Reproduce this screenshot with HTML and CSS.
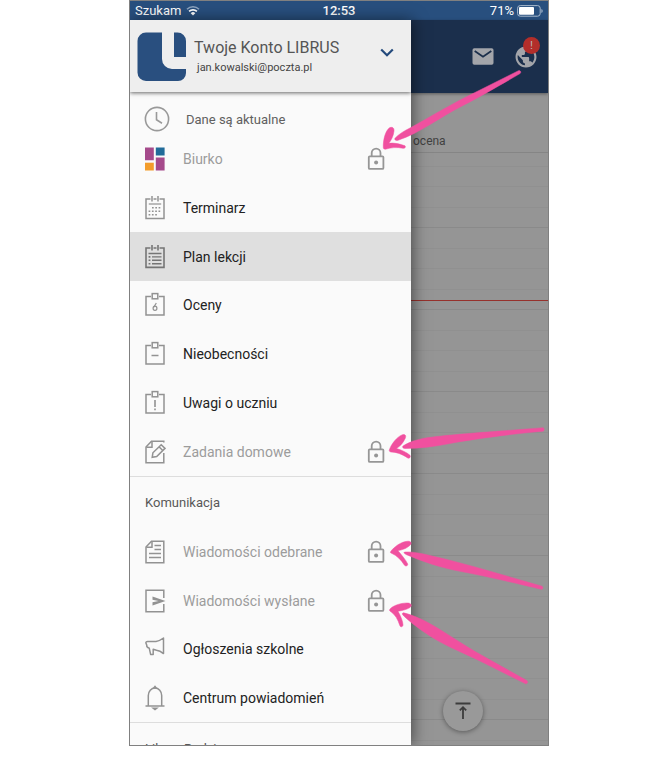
FILE: index.html
```html
<!DOCTYPE html>
<html lang="pl">
<head>
    <meta charset="UTF-8">
    <meta name="viewport" content="width=device-width, initial-scale=1.0">
    <title>Librus - menu</title>
    <link rel="stylesheet" href="styles.css">
</head>
<body>
    <!-- icons used more than once -->
    <svg class="sprite" aria-hidden="true">
        <symbol id="lock" viewBox="0 0 18 24">
            <rect x="1.8" y="9.3" width="14.6" height="12.6" rx="1" fill="none" stroke="#969696" stroke-width="1.8"/>
            <path d="M4.7 9V6a4.4 4.4 0 0 1 8.8 0v3" fill="none" stroke="#969696" stroke-width="1.8"/>
            <circle cx="9.1" cy="15.4" r="2" fill="#969696"/>
        </symbol>
        <symbol id="board" viewBox="0 0 22 26">
            <path d="M7 4.5H2v18.6h18V4.5h-5" fill="none" stroke="currentColor" stroke-width="1.5"/>
            <rect x="8.2" y="1.6" width="5.6" height="5.2" fill="none" stroke="currentColor" stroke-width="1.5"/>
        </symbol>
    </svg>

    <div class="phone">
        <div class="statusbar">
            <span class="carrier">Szukam
                <svg width="14" height="11" viewBox="0 0 14 11">
                    <path d="M1 4.2a8.6 8.6 0 0 1 12 0" fill="none" stroke="#8ea5c0" stroke-width="1.6"/>
                    <path d="M3.1 6.4a5.6 5.6 0 0 1 7.8 0" fill="none" stroke="#fff" stroke-width="1.7"/>
                    <path d="M4.7 8.2a3.3 3.3 0 0 1 4.6 0L7 10.6z" fill="#fff"/>
                </svg>
            </span>
            <span class="time">12:53</span>
            <span class="battery">71%
                <svg width="26" height="12" viewBox="0 0 26 12">
                    <rect x=".6" y=".6" width="22.6" height="10.6" rx="2.6" fill="none" stroke="#a9bacd" stroke-width="1"/>
                    <rect x="2" y="2" width="15" height="7.8" rx="1" fill="#fff"/>
                    <path d="M24.4 4v4a2.2 2.2 0 0 0 0-4z" fill="#a9bacd"/>
                </svg>
            </span>
        </div>

        <div class="screen">
            <nav class="drawer">
                <div class="account">
                    <svg class="logo" width="50" height="50" viewBox="0 0 50 50">
                        <path d="M9 0.500H25V27a10 10 0 0 0 10 10H49V41a8 8 0 0 1-8 8H9a8.500 8.500 0 0 1-8.500-8.500V9A8.500 8.500 0 0 1 9 .5z" fill="#294f7f"/>
                        <path d="M37 .5h3.500A8.500 8.500 0 0 1 49 9v16H37z" fill="#294f7f"/>
                    </svg>
                    <div class="account-text">
                        <div class="account-name">Twoje Konto LIBRUS</div>
                        <div class="account-mail">jan.kowalski@poczta.pl</div>
                    </div>
                    <button class="toggle" type="button" aria-label="Konta">
                        <svg width="14" height="9" viewBox="0 0 14 9"><path d="M1.200 1.500L7 7.200l5.800-5.700" fill="none" stroke="#244a7c" stroke-width="2.200"/></svg>
                    </button>
                </div>

                <div class="sync">
                    <svg width="26" height="26" viewBox="0 0 26 26" fill="none" stroke="#999" stroke-width="1.600">
                        <circle cx="13" cy="13" r="11.600"/>
                        <path d="M12.500 6v7.800l5.500 3.400"/>
                    </svg>
                    <span>Dane są aktualne</span>
                </div>

                <ul class="menu menu-main">
                    <li><a href="#" class="item locked">
                        <svg class="icon" viewBox="0 0 22 26">
                            <path d="M1 1.500h8.800v12.800H1zM11.800 11.500h8.800v13h-8.800z" fill="#a54a8b"/>
                            <path d="M11.800 1.500h8.800v8h-8.800z" fill="#216b99"/>
                            <path d="M1 16.700h8.800v7.800H1z" fill="#f39c2b"/>
                        </svg>
                        <span>Biurko</span>
                        <svg class="lock"><use href="#lock"/></svg>
                    </a></li>
                    <li><a href="#" class="item">
                        <svg class="icon" viewBox="0 0 22 26" fill="none" stroke="currentColor" stroke-width="1.500">
                            <path d="M6.500 4H2v19.400h18V4h-4.500M9.500 4h3M8 1v5.600M14 1v5.600"/>
                            <path d="M4.800 9h12.400" stroke-width="1.200"/>
                            <path d="M8 12.700h9.500M4.600 16.200h12.900M4.600 19.700h9.500" stroke-width="1.600" stroke-dasharray="1.700 1.600"/>
                        </svg>
                        <span>Terminarz</span>
                    </a></li>
                    <li><a href="#" class="item active">
                        <svg class="icon" viewBox="0 0 22 26" fill="none" stroke="currentColor" stroke-width="1.600">
                            <path d="M6.500 4H2v19.400h18V4h-4.500M9.500 4h3M8 1v5.600M14 1v5.600"/>
                            <path d="M4.500 9.500h13M8 12.900h9.500M8 16.300h9.500M8 19.700h9.500" stroke-width="1.400"/>
                            <path d="M4.600 12.900h1.800M4.600 16.300h1.800M4.600 19.700h1.800"/>
                        </svg>
                        <span>Plan lekcji</span>
                    </a></li>
                    <li><a href="#" class="item">
                        <svg class="icon" viewBox="0 0 22 26" fill="none" stroke="currentColor">
                            <use href="#board"/>
                            <path d="M12.300 11l-2.600 4.200" stroke-width="1.200"/>
                            <ellipse cx="11" cy="16.300" rx="1.900" ry="2.100" stroke-width="1.200"/>
                        </svg>
                        <span>Oceny</span>
                    </a></li>
                    <li><a href="#" class="item">
                        <svg class="icon" viewBox="0 0 22 26" fill="none" stroke="currentColor">
                            <use href="#board"/>
                            <path d="M7.500 14.500h7" stroke-width="1.500"/>
                        </svg>
                        <span>Nieobecności</span>
                    </a></li>
                    <li><a href="#" class="item">
                        <svg class="icon" viewBox="0 0 22 26" fill="none" stroke="currentColor">
                            <use href="#board"/>
                            <path d="M11 10v7M11 18.500v1.700" stroke-width="1.600"/>
                        </svg>
                        <span>Uwagi o uczniu</span>
                    </a></li>
                    <li><a href="#" class="item locked">
                        <svg class="icon" viewBox="0 0 22 26" fill="none" stroke="currentColor" stroke-width="1.500">
                            <path d="M19.800 3.500V2.200H7.500L2 8v15.800h17.800V14"/>
                            <path d="M8 2.500v5.800H2.300"/>
                            <path d="M8.200 18.300l.7-4.500 8.300-8.100 3.800 3.700-8.300 8.200zM15 7.800l3.800 3.700"/>
                        </svg>
                        <span>Zadania domowe</span>
                        <svg class="lock"><use href="#lock"/></svg>
                    </a></li>
                </ul>

                <h2 class="section">Komunikacja</h2>
                <ul class="menu menu-comm">
                    <li><a href="#" class="item locked">
                        <svg class="icon" viewBox="0 0 22 26" fill="none" stroke="currentColor" stroke-width="1.500">
                            <path d="M7.500 2.200H19.800v21.600H2V8z"/>
                            <path d="M8 2.500v5.800H2.300M10.500 6.500H17M10.500 10.500H17M5 14.500h12M5 18.500h12"/>
                        </svg>
                        <span>Wiadomości odebrane</span>
                        <svg class="lock"><use href="#lock"/></svg>
                    </a></li>
                    <li><a href="#" class="item locked">
                        <svg class="icon" viewBox="0 0 22 26">
                            <path d="M19.800 10V2.200H2v21.600h17.800V16" fill="none" stroke="currentColor" stroke-width="1.500"/>
                            <path d="M8.500 8.500L21.500 13 8.500 17.600v-3.400l6-1.200-6-1.200z" fill="currentColor"/>
                        </svg>
                        <span>Wiadomości wysłane</span>
                        <svg class="lock"><use href="#lock"/></svg>
                    </a></li>
                    <li><a href="#" class="item">
                        <svg class="icon" viewBox="0 0 22 26" fill="none" stroke="currentColor" stroke-width="1.500" stroke-linejoin="round">
                            <path d="M1.800 6.800Q2 5.500 3.500 5.500H12Q15.500 5 19.500 2v15.600Q16 14.500 12.500 14.200L9.200 13.200V18.400H6.600L5.300 12.300Q2.200 11.200 2.800 9.300z"/>
                        </svg>
                        <span>Ogłoszenia szkolne</span>
                    </a></li>
                    <li><a href="#" class="item">
                        <svg class="icon" viewBox="0 0 22 26" fill="none" stroke="currentColor" stroke-width="1.500">
                            <path d="M1.500 21h19M4.300 20.800V10.500a6.700 7.400 0 0 1 13.400 0v10.300"/>
                            <path d="M9.800 3l1.200-1.500L12.200 3zM9.300 23.200h3.400l-1.700 1.300z" fill="currentColor"/>
                        </svg>
                        <span>Centrum powiadomień</span>
                    </a></li>
                </ul>

                <h2 class="section">Librus Rodzina</h2>
            </nav>

            <main class="content">
                <div class="toolbar">
                    <button type="button" aria-label="Wiadomości">
                        <svg width="22" height="17" viewBox="0 0 22 17">
                            <rect x=".5" y=".3" width="21" height="16.400" rx="1.800" fill="#a3a5aa"/>
                            <path d="M2.700 3L11 8.700 19.300 3" fill="none" stroke="#1b2f4c" stroke-width="1.800"/>
                        </svg>
                    </button>
                    <button type="button" class="globe" aria-label="Powiadomienia">
                        <svg width="22" height="22" viewBox="1.500 1.500 21 21">
                            <path fill="#a3a5aa" d="M12 2C6.480 2 2 6.480 2 12s4.480 10 10 10 10-4.480 10-10S17.520 2 12 2zm-1 17.930c-3.950-.49-7-3.850-7-7.930 0-.62.080-1.210.210-1.790L9 15v1c0 1.100.9 2 2 2v1.930zm6.900-2.540c-.26-.81-1-1.390-1.900-1.390h-1v-3c0-.55-.45-1-1-1H8v-2h2c.55 0 1-.45 1-1V7h2c1.100 0 2-.9 2-2v-.41c2.930 1.190 5 4.060 5 7.410 0 2.080-.8 3.970-2.100 5.390z"/>
                        </svg>
                        <span class="badge">!</span>
                    </button>
                </div>
                <div class="column-head">ocena</div>
                <div class="timetable">
                    <div class="now"></div>
                </div>
                <button class="to-top" type="button" aria-label="Do góry">
                    <svg width="16" height="18" viewBox="0 0 16 18" fill="none" stroke="#3c3c3c" stroke-width="1.800">
                        <path d="M.5 1.500h15M8 17V5.500M4.800 8.400L8 5.200l3.200 3.200"/>
                    </svg>
                </button>
            </main>
        </div>

        <!-- arrows pointing at the locked items -->
        <svg class="arrows" width="420" height="746" viewBox="129 0 420 746" fill="#f0509f" stroke="#f0509f" stroke-width=".5" aria-hidden="true">
            <path d="M383.300 147.500C383 141 385 131 389.500 127.800C392.500 126.500 394.300 128 394 131C393.500 136 391 140.500 388.800 143.300C394 142.500 400 144 405 145.800C406 147 405 148.700 403 148.300C397 147 391 147.500 385.500 149.200C384 149.300 383.300 148.500 383.300 147.500z"/>
            <path d="M395.200 138C399 134 404 131 410 128C430 117 455 102 474 93L518.500 70.700C520.500 70 521.500 72.500 520 73.600C502 84 485 94 463 105.500C440 117 420 133 398 140.300C395.500 141 394 139.500 395.200 138z"/>
            <path d="M389.300 450C391 444.500 397 436.500 402.500 434.700C405.500 434 406.300 436 405.300 438.200C403 443.500 399.500 446.500 396.500 448.500C401.500 450 407 452.500 410 455.300C411 457 409.500 458.800 407.800 458C402 454 396 452 391 452C389.700 451.800 389 451 389.300 450z"/>
            <path d="M403.300 445.800C411 441 420 438.500 433 437C455 434 510 430.500 543 427.700C544.500 427.800 544.500 431 543 431.200C515 433.500 470 439.500 450 443.500C435 446.500 419 448.500 405 448.500C402.500 448.500 402 446.800 403.300 445.800z"/>
            <path d="M390.700 551.500C394 547 401 541.500 408 541.200C411.500 541.200 412 543.500 410 545.300C406 549 401.500 550 398 550.700C401.500 555 406 560 407.700 564C408 566 405.500 566.700 404.300 565C401 559.500 396.500 555.500 392 553.500C390.500 553 390 552.500 390.700 551.500z"/>
            <path d="M404.500 552C412 551.500 420 553 430 555.500C450 560 470 565.500 490 571.200L542 586.200C543.500 587 543 589.500 541.300 589.300C520 584 480 575 460 571.300C440 567.500 423 561.500 406.500 554.700C404 553.500 403.500 552.500 404.500 552z"/>
            <path d="M389.700 609.500C392 606 400 603 407 603C411.500 603 412.500 605.500 410 607.500C406 610 401.500 610.700 398 611.200C400.500 616 403 621 403 625C402.800 627 400.500 627.500 399.800 625.500C398 619.500 395 614.500 391 611.800C389.700 611 389.300 610.500 389.700 609.500z"/>
            <path d="M403.500 612.800C409 614 417 617 424 620.500C441 629 462 644.500 483 656L526.800 680.500C528.500 682 527 684.500 525.200 683.600L483 662.500C465 653.500 448 647 434 638.500C422 631 411 623 403.500 615.700C402 614.300 402 613 403.500 612.800z"/>
        </svg>
    </div>
</body>
</html>
```
FILE: styles.css
```css
*{
    margin: 0;
    padding: 0;
    box-sizing: border-box;
}

body{
    background: #fff;
    font-family: Roboto, "Liberation Sans", sans-serif;
    padding-left: 8px;
}

button{
    border: none;
    background: none;
    cursor: pointer;
    display: block;
}

svg{
    display: block;
}

.sprite{
    position: absolute;
    width: 0;
    height: 0;
}

.phone{
    position: relative;
    display: flex;
    flex-direction: column;
    max-width: 420px;
    height: calc(100vh - 20px);
    margin: 0 auto;
    border: 1px solid #808080;
    overflow: hidden;
}

/* status bar */
.statusbar{
    display: grid;
    grid-template-columns: 1fr auto 1fr;
    align-items: center;
    height: 19px;
    flex-shrink: 0;
    padding: 0 5px;
    background: #284f7e;
    color: #fff;
    font-size: 13px;
}
.carrier, .battery{
    display: flex;
    align-items: center;
    gap: 5px;
}
.battery{
    justify-content: flex-end;
    gap: 3px;
}
.time{
    font-weight: 500;
}

.screen{
    display: flex;
    flex: 1;
    min-height: 0;
}

/* drawer */
.drawer{
    position: relative;
    z-index: 1;
    width: 281px;
    flex-shrink: 0;
    overflow: hidden;
    background: #fafafa;
    box-shadow: 2px 0 14px rgba(0, 0, 0, 0.5);
}
.account{
    display: flex;
    align-items: center;
    height: 72px;
    padding: 1px 17px 0 7px;
    background: #eee;
    box-shadow: 0 1px 4px rgba(0, 0, 0, 0.6);
}
.account-text{
    flex: 1;
    padding-left: 7px;
    color: #555;
}
.account-name{
    font-size: 16px;
    line-height: 22px;
}
.account-mail{
    padding-left: 3px;
    font-size: 11px;
    line-height: 18px;
    color: #444;
}
.toggle{
    padding-bottom: 8px;
}
.sync{
    display: flex;
    align-items: center;
    gap: 16px;
    height: 43px;
    padding: 11px 14px 0;
    font-size: 13px;
    color: #606060;
}
.menu{
    display: grid;
    grid-auto-rows: 1fr;
    list-style: none;
    border-bottom: 1px solid #ddd;
}
.menu-main{
    height: 342px;
}
.menu-comm{
    height: 195px;
}
.item{
    display: flex;
    align-items: center;
    height: 100%;
    padding: 0 26px 0 14px;
    font-size: 14px;
    color: #222;
    text-decoration: none;
}
.item span{
    flex: 1;
    padding-left: 17px;
}
.item.locked{
    color: #9c9c9c;
}
.item.active{
    background: #dfdfdf;
}
.icon{
    width: 22px;
    height: 26px;
    color: #929292;
}
.active .icon{
    color: #757575;
}
.lock{
    width: 18px;
    height: 24px;
}
.section{
    height: 51px;
    padding-left: 15px;
    font-size: 13px;
    font-weight: 400;
    line-height: 51px;
    color: #585858;
}

/* timetable behind the drawer */
.content{
    position: relative;
    display: flex;
    flex-direction: column;
    flex: 1;
    background: #959595;
}
.toolbar{
    display: flex;
    align-items: center;
    justify-content: flex-end;
    gap: 21px;
    height: 73px;
    padding-right: 11px;
    background: #1b2f4c;
    box-shadow: 0 1px 3px rgba(0, 0, 0, 0.4);
}
.globe{
    position: relative;
}
.badge{
    position: absolute;
    top: -9px;
    right: -3px;
    width: 17px;
    height: 17px;
    border-radius: 50%;
    background: #b32e2a;
    color: #b9b9b9;
    font-size: 11px;
    line-height: 17px;
    text-align: center;
}
.column-head{
    height: 60px;
    padding: 39px 0 0 2px;
    border-bottom: 1px solid #858585;
    font-size: 12px;
    line-height: 18px;
    color: #414141;
}
.timetable{
    flex: 1;
    padding-top: 147px;
    background-image:
        linear-gradient(#8a8a8a 1px, transparent 1px),
        linear-gradient(#909090 1px, transparent 1px),
        linear-gradient(#909090 1px, transparent 1px);
    background-size: 100% 82px, 100% 41px, 100% 41px;
    background-position: 0 74px, 0 33px, 0 13px;
}
.now{
    height: 1px;
    background: #96312c;
}
.to-top{
    position: absolute;
    right: 65px;
    bottom: 14px;
    display: flex;
    align-items: center;
    justify-content: center;
    width: 40px;
    height: 40px;
    border-radius: 50%;
    background: #999;
    box-shadow: 0 1px 5px rgba(0, 0, 0, 0.4);
}

.arrows{
    position: absolute;
    top: -1px;
    left: -1px;
    z-index: 2;
    pointer-events: none;
}
```
